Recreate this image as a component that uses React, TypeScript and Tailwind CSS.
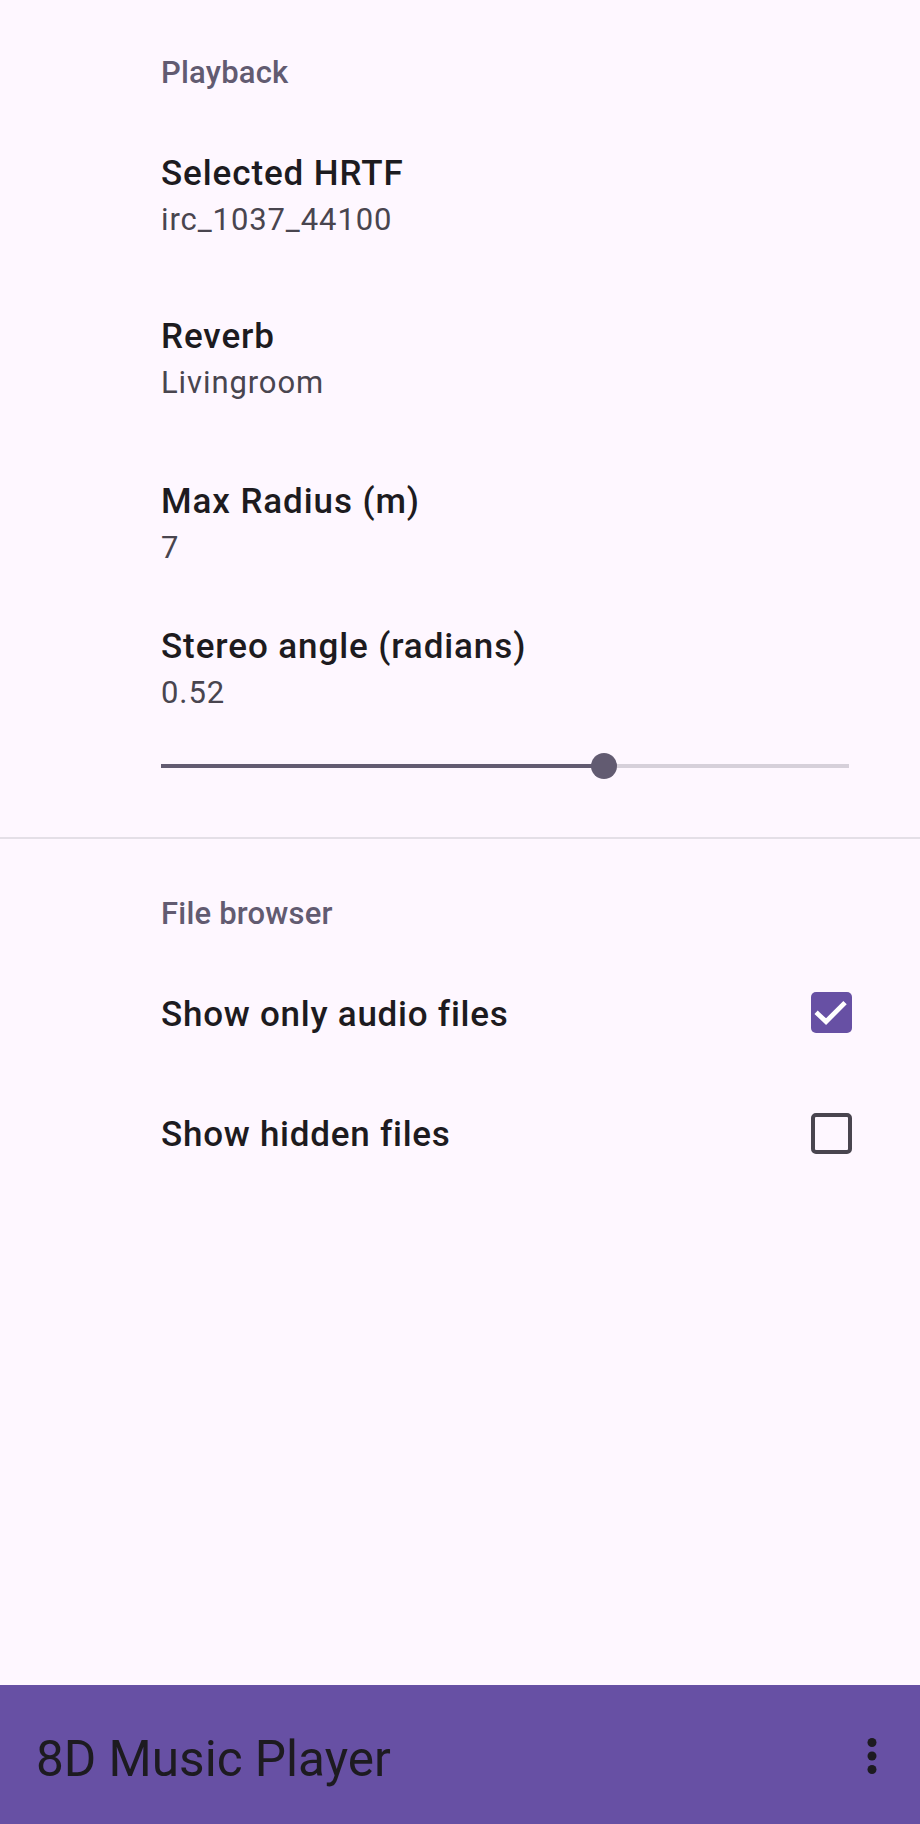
import React from "react";

function Item({ title, summary, className }: { title: string; summary: string; className?: string }) {
  return (
    <div className={className}>
      <div className="text-[35px] leading-[40px] font-medium tracking-[0.9px] text-[#1d1b20]">{title}</div>
      <div className="mt-[8px] text-[31px] leading-[36px] tracking-[0.9px] text-[#49454f]">{summary}</div>
    </div>
  );
}

function CheckRow({ label, checked, className, boxOffset }: { label: string; checked: boolean; className?: string; boxOffset: string }) {
  return (
    <div className={"flex items-start justify-between " + (className ?? "")}>
      <div className="text-[35px] leading-[40px] font-medium tracking-[0.75px] text-[#1d1b20]">{label}</div>
      {checked ? (
        <div className={"w-[41px] h-[41px] rounded-[5px] bg-[#6750a4] flex items-center justify-center " + boxOffset}>
          <svg width="41" height="41" viewBox="0 0 18 18">
            <path d="M3 9.6 L6.6 13 L14.2 5.4" fill="none" stroke="#ffffff" strokeWidth="2.1" strokeLinecap="square" />
          </svg>
        </div>
      ) : (
        <div className={"w-[41px] h-[41px] rounded-[5px] border-[4.5px] border-[#49454f] " + boxOffset} />
      )}
    </div>
  );
}

export default function App() {
  return (
    <div className="w-[920px] h-[1824px] bg-[#fef7ff] flex flex-col overflow-hidden font-['Roboto',sans-serif]">
      <div className="flex-1 flex flex-col">
        <div className="pl-[161px] pr-[68px]">
          <div className="pt-[55px] text-[31px] leading-[36px] font-medium tracking-[0.2px] text-[#625b71]">Playback</div>
          <Item className="mt-[63px]" title="Selected HRTF" summary="irc_1037_44100" />
          <Item className="mt-[79px]" title="Reverb" summary="Livingroom" />
          <Item className="mt-[81px]" title="Max Radius (m)" summary="7" />
          <Item className="mt-[61px]" title="Stereo angle (radians)" summary="0.52" />
          <div className="relative mt-[42px] h-[26px] w-[688px] flex items-center">
            <div className="h-[4px] w-[443px] bg-[#625b71]" />
            <div className="h-[4px] flex-1 bg-[#d6d0da]" />
            <div className="absolute left-[430px] top-0 w-[26px] h-[26px] rounded-full bg-[#625b71]" />
          </div>
        </div>
        <div className="mt-[58px] h-[2px] bg-[#e4dfe7]" />
        <div className="pl-[161px] pr-[68px]">
          <div className="mt-[57px] text-[31px] leading-[36px] font-medium tracking-[0.2px] text-[#625b71]">File browser</div>
          <CheckRow className="mt-[63px]" label="Show only audio files" checked={true} boxOffset="-mt-[3px]" />
          <CheckRow className="mt-[80px]" label="Show hidden files" checked={false} boxOffset="-mt-[2px]" />
        </div>
      </div>
      <div className="h-[139px] bg-[#6750a4] flex items-start justify-between pl-[36px] pr-[21px]">
        <div className="mt-[46px] text-[49.5px] leading-[56px] text-[#1d1b20]">8D Music Player</div>
        <svg className="mt-[44px]" width="54" height="54" viewBox="0 0 24 24" fill="#1d1b20">
          <circle cx="12" cy="6" r="2" />
          <circle cx="12" cy="12" r="2" />
          <circle cx="12" cy="18" r="2" />
        </svg>
      </div>
    </div>
  );
}
